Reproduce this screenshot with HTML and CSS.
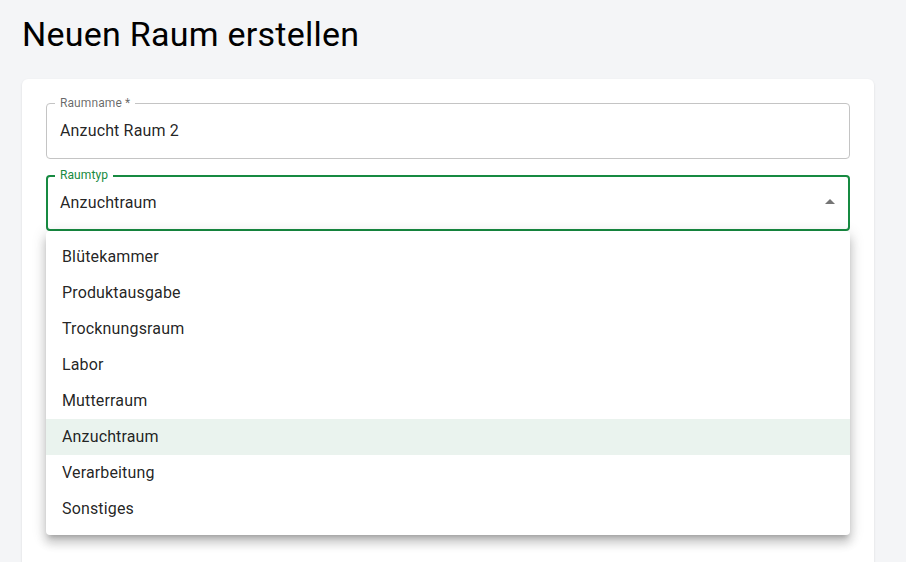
FILE: index.html
```html
<!DOCTYPE html>
<html lang="de">
<head>
<meta charset="utf-8">
<title>Neuen Raum erstellen</title>
<link rel="stylesheet" href="styles.css">
</head>
<body>
<main class="page">
  <h1 class="title">Neuen Raum erstellen</h1>
  <section class="card">
    <div class="field">
      <label class="field-label">Raumname *</label>
      <div class="field-box">
        <span class="field-value">Anzucht Raum 2</span>
      </div>
    </div>
    <div class="field field-focused">
      <label class="field-label">Raumtyp</label>
      <div class="field-box">
        <span class="field-value">Anzuchtraum</span>
        <svg class="arrow" viewBox="0 0 24 24" width="24" height="24"><path d="M7 14l5-5 5 5z" fill="#757575"/></svg>
      </div>
      <ul class="menu">
        <li class="menu-item">Blütekammer</li>
        <li class="menu-item">Produktausgabe</li>
        <li class="menu-item">Trocknungsraum</li>
        <li class="menu-item">Labor</li>
        <li class="menu-item">Mutterraum</li>
        <li class="menu-item selected">Anzuchtraum</li>
        <li class="menu-item">Verarbeitung</li>
        <li class="menu-item">Sonstiges</li>
      </ul>
    </div>
    <div class="spacer"></div>
  </section>
</main>
</body>
</html>
```
FILE: styles.css
```css
* { box-sizing: border-box; }
html, body {
  margin: 0;
  padding: 0;
  background: #f4f5f7;
  font-family: Roboto, "Noto Sans", Arial, sans-serif;
  color: rgba(0,0,0,0.87);
  overflow: hidden;
}
.page {
  padding: 13px 32px 0 22px;
}
.title {
  margin: 0 0 24px 0;
  font-size: 34px;
  font-weight: 400;
  line-height: 42px;
  color: #000;
  letter-spacing: 0.25px;
}
.card {
  background: #fff;
  border-radius: 6px;
  box-shadow: 0 1px 3px rgba(0,0,0,0.08), 0 1px 2px rgba(0,0,0,0.04);
  padding: 24px;
  display: flex;
  flex-direction: column;
  gap: 16px;
}
.field {
  position: relative;
}
.field-box {
  height: 56px;
  border: 1px solid #c4c4c4;
  border-radius: 4px;
  display: flex;
  align-items: center;
  padding: 0 7px 2px 13px;
}
.field-value {
  flex: 1;
  font-size: 16px;
  letter-spacing: 0.15px;
  color: rgba(0,0,0,0.87);
}
.field-label {
  position: absolute;
  left: 9px;
  top: -7px;
  padding: 0 5px;
  background: #fff;
  font-size: 12px;
  line-height: 14px;
  color: rgba(0,0,0,0.6);
  letter-spacing: 0.1px;
}
.field-focused .field-box {
  border: 2px solid #178a41;
  padding: 0 6px 2px 12px;
}
.field-focused .field-label {
  color: #178a41;
}
.arrow { display: block; }
.menu {
  position: absolute;
  left: 0;
  right: 0;
  top: 56px;
  margin: 0;
  padding: 8px 0;
  list-style: none;
  background: #fff;
  border-radius: 4px;
  box-shadow: 0px 5px 5px -3px rgba(0,0,0,0.2), 0px 8px 10px 1px rgba(0,0,0,0.14), 0px 3px 14px 2px rgba(0,0,0,0.12);
  z-index: 10;
}
.menu-item {
  height: 36px;
  display: flex;
  align-items: center;
  padding: 0 16px 2px;
  font-size: 16px;
  letter-spacing: 0.15px;
  color: rgba(0,0,0,0.87);
}
.menu-item.selected {
  background: #eaf3ee;
}
.spacer {
  height: 400px;
}
```
